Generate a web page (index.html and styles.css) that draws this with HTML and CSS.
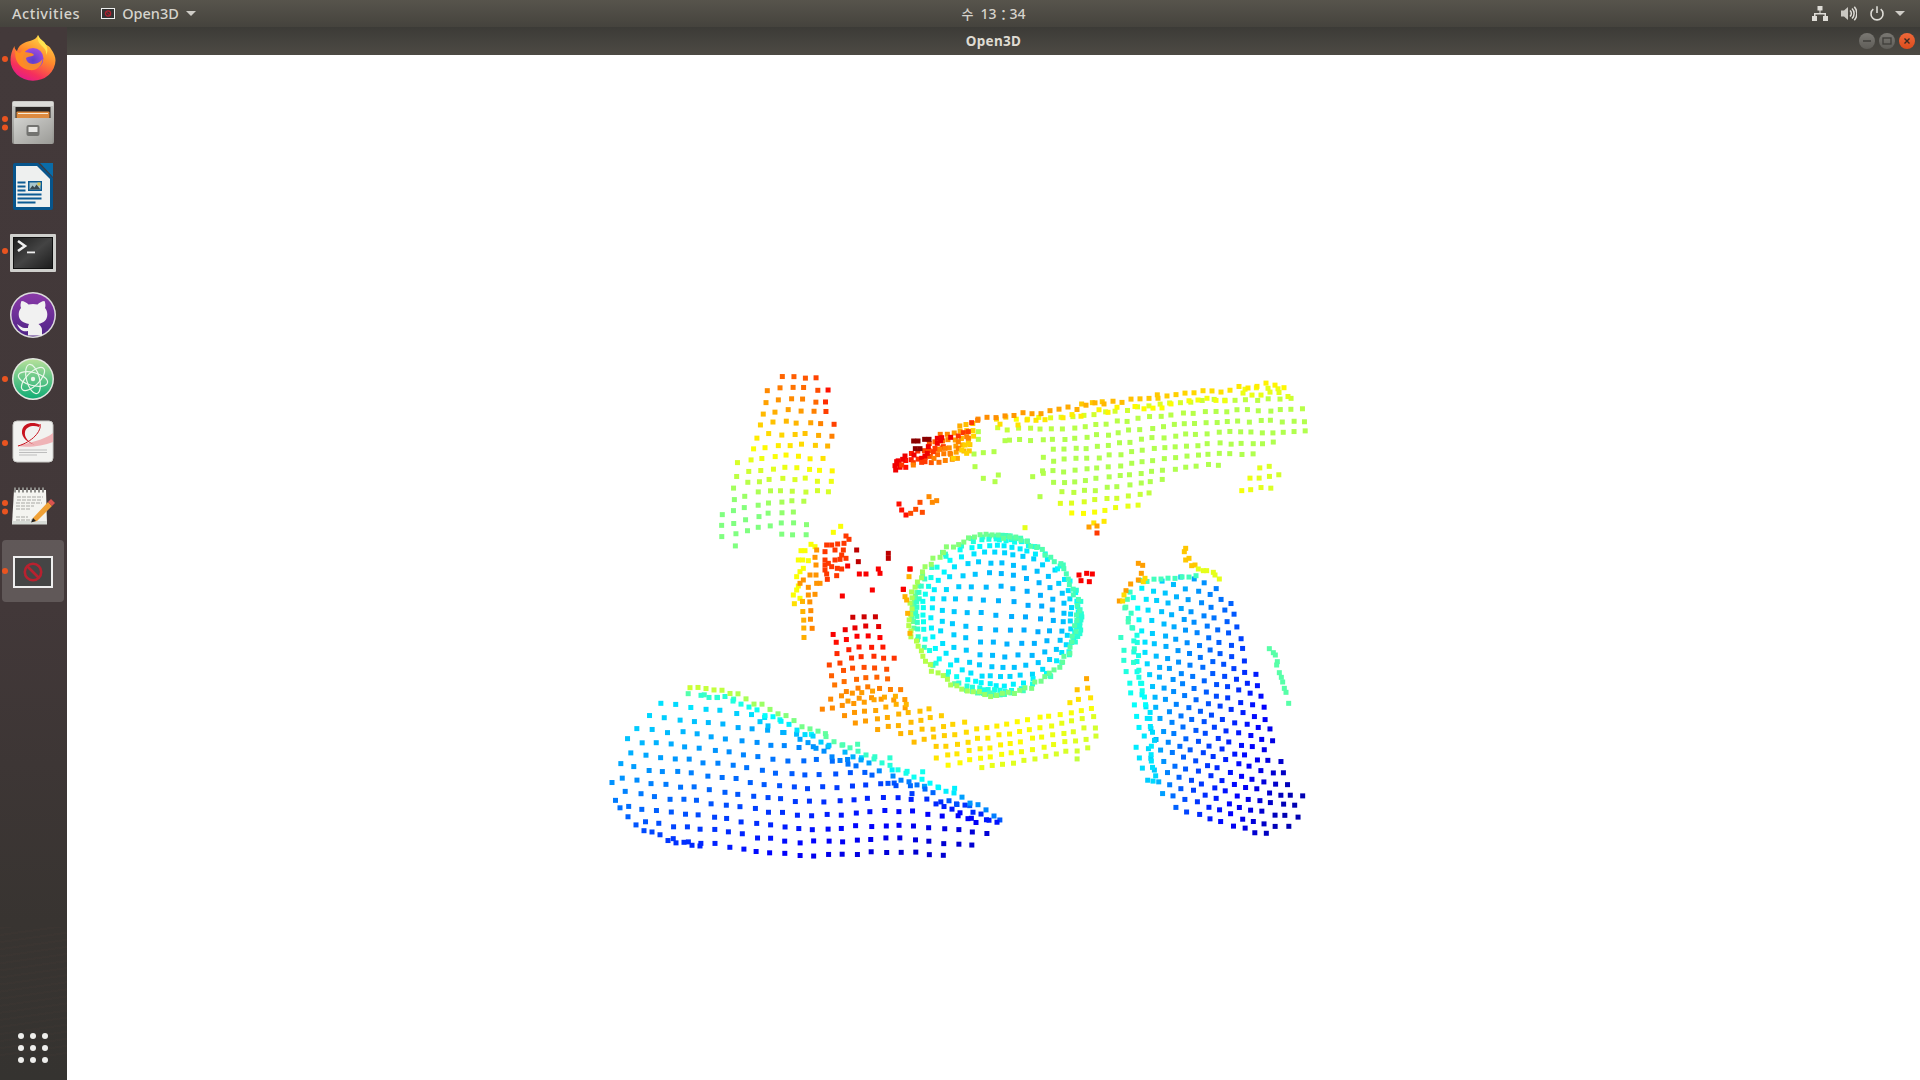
FILE: index.html
```html
<!DOCTYPE html>
<html lang="en">
<head>
<meta charset="utf-8">
<title>Open3D</title>
<link rel="stylesheet" href="styles.css">
</head>
<body>
<div class="desktop">
  <header class="topbar">
    <div class="top-left">
      <span class="top-label activities">Activities</span>
      <span class="app-menu">
        <svg class="mini-icon" viewBox="0 0 14 11"><rect x=".5" y=".5" width="13" height="10" fill="#333" stroke="#eee"/><circle cx="7" cy="5.5" r="2.6" fill="none" stroke="#b3202f" stroke-width="1.3"/><path d="M5.2 3.7l3.6 3.6" stroke="#b3202f"/></svg>
        <span class="top-label">Open3D</span>
        <svg class="caret" viewBox="0 0 10 5"><path d="M0 0h10L5 5z" fill="#cfcdc7"/></svg>
      </span>
    </div>
    <div class="clock"><span class="day">수</span><span>13</span><span class="colon">：</span><span>34</span></div>
    <div class="top-right">
      <svg class="status" viewBox="0 0 16 15"><path d="M5.5 0h5v4.5h-2V7H14v3h2v5h-5v-5h1.5V8.500h-9V10H5v5H0v-5h2V7h5.500V4.500h-2z" fill="#dedcd6"/></svg>
      <svg class="status" viewBox="0 0 16 15"><path d="M0 4.500h3L7 1v13L3 10.500H0z" fill="#c9c7c1"/><path d="M9 4.500a4 4 0 0 1 0 6M11 2.500a7 7 0 0 1 0 10M13.300 .8a10 10 0 0 1 0 13.400" fill="none" stroke="#dedcd6" stroke-width="1.500"/></svg>
      <svg class="status" viewBox="0 0 16 15"><path d="M4.300 3.200a6 6 0 1 0 7.400 0" fill="none" stroke="#dedcd6" stroke-width="1.600"/><path d="M8 .3v6.700" stroke="#dedcd6" stroke-width="1.600"/></svg>
      <svg class="caret tail" viewBox="0 0 10 5"><path d="M0 0h10L5 5z" fill="#cfcdc7"/></svg>
    </div>
  </header>
  <div class="workspace">
    <nav class="dock">
      <div class="dock-item run-1 first">
        <svg class="dock-icon" viewBox="0 0 48 48">
          <defs>
            <linearGradient id="ff" x1=".8" y1="0" x2=".3" y2="1"><stop offset="0" stop-color="#ffe14a"/><stop offset=".45" stop-color="#ff8a2c"/><stop offset=".8" stop-color="#f5305c"/><stop offset="1" stop-color="#e31a8c"/></linearGradient>
            <radialGradient id="ffg" cx=".5" cy=".6" r=".6"><stop offset="0" stop-color="#5a3fc8"/><stop offset="1" stop-color="#a04be0"/></radialGradient>
            <linearGradient id="metal" x1="0" y1="0" x2="0" y2="1"><stop offset="0" stop-color="#c9c9c6"/><stop offset="1" stop-color="#8f8f8b"/></linearGradient>
            <linearGradient id="drawer" x1="0" y1="0" x2="1" y2="1"><stop offset="0" stop-color="#d2d2cf"/><stop offset="1" stop-color="#9b9b97"/></linearGradient>
            <linearGradient id="term" x1="0" y1="0" x2="1" y2="1"><stop offset="0" stop-color="#1f1f1f"/><stop offset=".5" stop-color="#444"/><stop offset="1" stop-color="#1d1d1d"/></linearGradient>
            <linearGradient id="atom" x1="0" y1="0" x2="0" y2="1"><stop offset="0" stop-color="#b5e09a"/><stop offset="1" stop-color="#12ad75"/></linearGradient>
            <linearGradient id="gh" x1="0" y1="0" x2="0" y2="1"><stop offset="0" stop-color="#8a3aa8"/><stop offset="1" stop-color="#4f2487"/></linearGradient>
          </defs>
          <path d="M29 1c.5 4 3 6.500 7 9 3 1.500 5 3 6 5 3 4 4.500 8 4.500 11.500A22.500 20.500 0 0 1 1.500 26c0-5 1.500-10 4-14 0 2.500 1 4 2.500 5 1-4 4-7 8-8.500 5-2 11-2 13-7.500z" fill="url(#ff)"/>
          <path d="M29 1c-1 7 2 9 6 13 2 2 2.500 5 2 7 3-4 1-11-3-14-2-1.500-4-3.500-5-6z" fill="#ffe34f"/>
          <circle cx="24" cy="24.500" r="10.500" fill="url(#ffg)"/>
          <path d="M6 15c1 3 3 3.500 5 4 2-3 5-5 8-5-2 2-3 3-3 4 4 .500 8 1 9 3-2 2-6 1-8 3 0 3 3 6 7 6 5 0 8-3 9.500-5-.5 8-7 12-13 11-8-1-13-7-14-13-.5-3 0-5 -.5-8z" fill="#ff8f1f" opacity=".92"/>
        </svg>
      </div>
      <div class="dock-item run-2">
        <svg class="dock-icon" viewBox="0 0 48 48">
          <g transform="translate(0 2)">
            <rect x="3" y="1" width="42" height="43" rx="2" fill="url(#metal)"/>
            <rect x="4" y="2" width="40" height="4" fill="#dcdcd9"/>
            <rect x="6.500" y="7" width="35" height="11" fill="#2a2625"/>
            <rect x="7.500" y="11.500" width="33" height="7" rx="1" fill="#dd8a3f"/>
            <rect x="9" y="13" width="30" height="1" fill="#f6ead6"/>
            <rect x="5" y="18" width="38.500" height="26" rx="1" fill="url(#drawer)"/>
            <rect x="17.500" y="25" width="13" height="11" rx="2" fill="#737370"/>
            <rect x="19.500" y="27" width="9" height="5" fill="#e8e8e6"/>
          </g>
        </svg>
      </div>
      <div class="dock-item">
        <svg class="dock-icon" viewBox="0 0 48 48">
          <g transform="translate(0 1)">
            <path d="M6 0h23l15 15v30a2 2 0 0 1-2 2H6a2 2 0 0 1-2-2V2a2 2 0 0 1 2-2z" fill="#07558c"/>
            <path d="M31 0h13v14z" fill="#0a6ca8"/>
            <path d="M7 3h21l13 13v28H7z" fill="#eef0ef"/>
            <path d="M8.500 18.500h8v2h-8zM8.500 22.500h8v2h-8zM8.500 26.500h8v2h-8zM8.500 30.500h24v2h-24zM8.500 34.500h24v2h-24zM8.500 38.500h18v2h-18z" fill="#0b5a93"/>
            <rect x="19" y="18" width="14" height="10" fill="#0b5a93"/>
            <rect x="20.500" y="19.500" width="11" height="7" fill="#a9c7cc"/>
            <path d="M20.500 26.500l3-4 2 2 2-3 4 5z" fill="#3b4a50"/>
            <rect x="28.500" y="19.500" width="3" height="3" fill="#d9c24a"/>
          </g>
        </svg>
      </div>
      <div class="dock-item run-1">
        <svg class="dock-icon" viewBox="0 0 48 48">
          <g transform="translate(0 4)">
            <rect x="1" y="4" width="46" height="38" rx="1" fill="#cfcfcc"/>
            <rect x="4" y="7" width="40" height="32" fill="#111"/>
            <rect x="5" y="8" width="38" height="30" fill="url(#term)"/>
            <path d="M9 11l7 5-7 5" fill="none" stroke="#efefef" stroke-width="2.600"/>
            <rect x="18" y="21.500" width="8" height="1.800" fill="#efefef"/>
          </g>
        </svg>
      </div>
      <div class="dock-item">
        <svg class="dock-icon" viewBox="0 0 48 48">
          <g transform="translate(0 1)">
            <circle cx="24" cy="24" r="23" fill="#dcdcdc"/>
            <circle cx="24" cy="24" r="21.500" fill="url(#gh)"/>
            <path d="M12.500 10C15 10 18 12 19.500 13.500 22.500 12.800 25.500 12.800 28.500 13.500 30 12 33 10 35.500 10 36.500 12 36.800 15 36 17 37.600 19 38.300 21 38.300 23.500 38.300 29 34.500 32 29.500 33 31.500 34.500 33 36.500 33 39V44.500H19V40C15 41 11 40 8 33 11 35 13 37 16 37L19 37C19 35 19.500 34 20 33 14 32 9.700 29 9.700 23.500 9.700 21 10.400 19 12 17 11.200 15 11.500 12 12.500 10z" fill="#f1f1f1"/>
          </g>
        </svg>
      </div>
      <div class="dock-item run-1">
        <svg class="dock-icon" viewBox="0 0 48 48">
          <g transform="translate(0 1)">
            <circle cx="24" cy="24" r="21" fill="#e4e8e2"/>
            <circle cx="24" cy="24" r="19.500" fill="url(#atom)"/>
            <g fill="none" stroke="#e9f7ea" stroke-width="1.200">
              <ellipse cx="24" cy="24" rx="15" ry="6.500" transform="rotate(15 24 24)"/>
              <ellipse cx="24" cy="24" rx="15" ry="6.500" transform="rotate(75 24 24)"/>
              <ellipse cx="24" cy="24" rx="15" ry="6.500" transform="rotate(135 24 24)"/>
            </g>
            <circle cx="24" cy="24" r="2.200" fill="#e9f7ea"/>
          </g>
        </svg>
      </div>
      <div class="dock-item run-1">
        <svg class="dock-icon" viewBox="0 0 48 48">
          <rect x="4" y="3" width="40" height="41" rx="4" fill="#f2f2f0" stroke="#c9c9c6"/>
          <path d="M8 28c10-3 28-6 36-13v9c-10 4-25 6-36 4z" fill="#efb3b6"/>
          <path d="M31 7c-7-4-17-2-18 6-1 7 7 12 13 14-7-3-11-8-10-13 1-6 9-7 14-5z" fill="#c8141f"/>
          <path d="M31 6c2 7-8 18-22 22" fill="none" stroke="#c8141f" stroke-width="1"/>
          <path d="M10 32h28M10 34.500h28M10 37h18" stroke="#bdbdbd" stroke-width="1"/>
        </svg>
      </div>
      <div class="dock-item run-2">
        <svg class="dock-icon" viewBox="0 0 48 48">
          <g transform="translate(0 2)">
            <path d="M5 6h32l1 34H3z" fill="#f4f4f0"/>
            <path d="M3 37h35v3.500H3z" fill="#d7dbd6"/>
            <path d="M6 3.500v5M10 3.500v5M14 3.500v5M18 3.500v5M22 3.500v5M26 3.500v5M30 3.500v5M34 3.500v5" stroke="#8d8d8a" stroke-width="2"/>
            <path d="M8 13h26M8 16h24M7 19h26M7 22h18M7 25h14M7 33h12M7 36h16" stroke="#a8a8a4" stroke-width="1" stroke-dasharray="4 1"/>
            <path d="M24 34L39 18l4 4-15 15-5 1z" fill="#f0a136"/>
            <path d="M39 18l3-3 4 4-3 3z" fill="#d9534f"/>
            <path d="M22 38.500l2-4.500 3 3z" fill="#222"/>
          </g>
        </svg>
      </div>
      <div class="dock-item run-1 active">
        <svg class="dock-icon" viewBox="0 0 48 48">
          <g transform="translate(0 2)">
            <rect x="4" y="8" width="40" height="32" fill="#efefef"/>
            <rect x="6" y="10" width="36" height="28" fill="#454545"/>
            <circle cx="24" cy="24" r="8.200" fill="none" stroke="#b8212f" stroke-width="2.600"/>
            <path d="M18.500 18.500l11 11" stroke="#b8212f" stroke-width="2.600"/>
          </g>
        </svg>
      </div>
      <div class="dock-spacer"></div>
      <div class="grid-button">
        <i></i><i></i><i></i><i></i><i></i><i></i><i></i><i></i><i></i>
      </div>
    </nav>
    <main class="window">
      <div class="titlebar">
        <span class="title">Open3D</span>
        <div class="win-buttons">
          <span class="win-btn"><svg viewBox="0 0 16 16"><path d="M4 8h8" stroke="#3f3e3a" stroke-width="1.500"/></svg></span>
          <span class="win-btn"><svg viewBox="0 0 16 16"><rect x="4" y="5" width="8" height="6" fill="none" stroke="#3f3e3a" stroke-width="1.300"/></svg></span>
          <span class="win-btn close"><svg viewBox="0 0 16 16"><path d="M5.500 5.500l5 5M10.500 5.500l-5 5" stroke="#3a2a22" stroke-width="1.400"/></svg></span>
        </div>
      </div>
      <canvas id="cloud" class="cloud" width="1853" height="1025"></canvas>
    </main>
  </div>
</div>
<script src="cloud.js"></script>
</body>
</html>
```
FILE: styles.css
```css
* { box-sizing: border-box; }
html, body { margin: 0; height: 100%; overflow: hidden; background: #fff; }
.desktop { display: flex; flex-direction: column; width: 1920px; height: 1080px; font-family: "Noto Sans", "Noto Sans CJK KR", sans-serif; }

.topbar { flex: 0 0 27px; display: grid; grid-template-columns: 1fr auto 1fr; padding-left: 67px; align-items: center; background: linear-gradient(#57544c, #45433d); color: #d6d4cd; font-size: 14.500px; font-weight: 500; position: relative; }
.top-left { display: flex; align-items: center; margin-left: -55px; gap: 21px; }
.top-label { line-height: 1; }
.activities { letter-spacing: .57px; }
.app-menu { display: flex; align-items: center; gap: 7px; }
.mini-icon { width: 14px; height: 11px; }
.caret { width: 10px; height: 5px; }
.clock { display: flex; align-items: center; font-size: 14px; }
.day { margin-right: 7px; font-family: "Noto Sans CJK KR", sans-serif; font-size: 13px; }
.colon { font-family: "Noto Sans CJK KR", sans-serif; width: 13px; text-align: center; }
.top-right { display: flex; justify-content: flex-end; align-items: center; gap: 12.500px; padding-right: 15px; }
.status { width: 16px; height: 15px; }
.tail { margin-left: -2.500px; }

.workspace { flex: 1; display: flex; min-height: 0; }
.dock { flex: 0 0 67px; display: flex; flex-direction: column; padding: 0 1px 17px 0; background:
  repeating-linear-gradient(172deg, rgba(110,70,60,.05) 0 2px, rgba(0,0,0,0) 2px 7px) 0 900px / 100% 130px no-repeat,
  linear-gradient(#43393a, #423839 55%, #383431 85%, #353330); }
.dock-item { flex: 0 0 64px; display: flex; align-items: center; justify-content: center; position: relative; }
.dock-item.first { margin-top: -1px; }
.dock-icon { width: 48px; height: 48px; }
.dock-item.active::after { content: ""; position: absolute; left: 2px; right: 2px; top: 2px; bottom: 0; border-radius: 4px; background: rgba(255,255,255,.16); z-index: 0; }
.dock-item.active .dock-icon { position: relative; z-index: 1; }
.run-1::before, .run-2::before { content: ""; position: absolute; left: 2px; top: 50%; width: 6px; height: 6px; margin-top: -2px; border-radius: 50%; background: #e95420; z-index: 2; }
.run-2::before { margin-top: -6.500px; box-shadow: 0 8.500px 0 #e95420; }
.dock-spacer { flex: 1; }
.grid-button { display: grid; grid-template-columns: repeat(3, 6px); gap: 6px; justify-content: center; }
.grid-button i { width: 6px; height: 6px; border-radius: 50%; background: #eeeeec; }

.window { flex: 1; display: flex; flex-direction: column; min-width: 0; }
.titlebar { flex: 0 0 28px; display: flex; align-items: center; justify-content: center; position: relative; background: linear-gradient(#3c3b37, #4d4a44); }
.title { color: #dfdbd2; font-size: 13.500px; font-weight: 700; letter-spacing: .3px; }
.win-buttons { position: absolute; right: 5px; top: 6px; display: flex; gap: 4px; }
.win-btn { width: 16px; height: 16px; border-radius: 50%; background: linear-gradient(#7a7873, #5f5d58); }
.win-btn svg { display: block; width: 16px; height: 16px; }
.win-btn.close { background: linear-gradient(#f0683a, #dc4c1c); }
.cloud { display: block; width: 1853px; height: 1025px; background: #fff; }
```
FILE: cloud.js
```js
(function () {
  var ctx = document.getElementById('cloud').getContext('2d');
  var OX = 67, OY = 55, seed = 12345;
  function rnd() { seed = (seed * 1664525 + 1013904223) >>> 0; return seed / 4294967296; }
  function base(v) {
    if (v <= -0.75) return 0;
    if (v <= -0.25) return (v + 0.75) / 0.5;
    if (v <= 0.25) return 1;
    if (v <= 0.75) return (0.75 - v) / 0.5;
    return 0;
  }
  function jet(t) {
    var r = base(2 * t - 1.5), g = base(2 * t - 1), b = base(2 * t - 0.5);
    return 'rgb(' + Math.round(r * 255) + ',' + Math.round(g * 255) + ',' + Math.round(b * 255) + ')';
  }
  function dot(x, y, t) { ctx.fillStyle = jet(t); ctx.fillRect(x - OX - 2.5, y - OY - 2.5, 5, 5); }
  function inside(p, x, y) {
    var c = false;
    for (var i = 0, j = p.length - 1; i < p.length; j = i++) {
      if ((p[i][1] > y) !== (p[j][1] > y) && x < (p[j][0] - p[i][0]) * (y - p[i][1]) / (p[j][1] - p[i][1]) + p[i][0]) c = !c;
    }
    return c;
  }
  function lattice(poly, o, u, v, tf, jit, warp) {
    for (var i = -70; i <= 70; i++) for (var j = -70; j <= 70; j++) {
      var x = o[0] + i * u[0] + j * v[0], y = o[1] + i * u[1] + j * v[1];
      if (warp) { var w = warp(x, y); x = w[0]; y = w[1]; }
      x += (rnd() - 0.5) * jit; y += (rnd() - 0.5) * jit;
      if (inside(poly, x, y)) dot(x, y, tf(x, y));
    }
  }
  function scatter(list, t, sx, sy) {
    list.forEach(function (p) { dot(sx + p[0] / 3, sy + p[1] / 3, t); });
  }
  function lerp(pts, x) {
    if (x <= pts[0][0]) return pts[0][1];
    for (var i = 1; i < pts.length; i++) if (x <= pts[i][0]) {
      return pts[i - 1][1] + (pts[i][1] - pts[i - 1][1]) * (x - pts[i - 1][0]) / (pts[i][0] - pts[i - 1][0]);
    }
    return pts[pts.length - 1][1];
  }

  /* tall panel, upper left */
  lattice([[782,375],[790,368],[802,367],[818,371],[825,381],[832,397],[835,423],[837,437],[834,467],[837,490],[835,498],[818,500],[802,516],[820,528],[800,544],[770,537],[742,541],[739,561],[731,550],[716,538],[713,524],[725,506],[729,495],[731,465],[744,451],[750,433],[757,414],[765,405],[764,394],[772,385]],
    [780,450], [12,-1.2], [-1.5,11.4],
    function (x, y) {
      var d = (x - 838) * (x - 838) / 300 + (y - 405) * (y - 405) / 1400;
      return Math.max(0.5, 0.5 + (515 - y) * 0.0019 + (x - 760) * 0.0006) + 0.13 * Math.exp(-d);
    }, 3,
    function (x, y) { return [x + 5 * Math.sin(y / 28), y + 5 * Math.sin(x / 26)]; });

  /* long ridge, upper right */
  var ridge = function (x) { return lerp([[975,421],[1115,402],[1180,394],[1270,385],[1300,392]], x); };
  lattice([[985,415],[1115,400],[1180,392],[1210,395],[1270,383],[1295,392],[1305,410],[1308,437],[1290,440],[1262,455],[1227,465],[1175,472],[1160,490],[1162,500],[1130,510],[1115,515],[1100,530],[1085,515],[1062,515],[1055,495],[1040,490],[1043,465],[1045,445],[1000,440]],
    [1150,440], [11,-0.8], [0.3,10.8],
    function (x, y) {
      var k = Math.exp(-Math.max(0, y - ridge(x)) / 7), s = x < 1200 ? 0.13 : 0.08, tip = Math.max(0, y - 488) * 0.003 * (x < 1170 ? 1 : 0);
      return 0.548 + s * k + tip;
    }, 2.4,
    function (x, y) { return [x + 3 * Math.sin(y / 22), y + 3 * Math.sin(x / 40)]; });
  /* dense crest of the ridge */
  for (var cx = 978; cx < 1290; cx += 9) {
    var cy = ridge(cx) + (rnd() - 0.5) * 5;
    dot(cx, cy, 0.74 - (cx - 978) * 0.00035);
    if (rnd() > 0.25) dot(cx + 4, cy + 6 + rnd() * 4, 0.66 - (cx - 978) * 0.0002);
  }
  /* lobe beneath the ridge */
  lattice([[1252,460],[1272,460],[1287,470],[1285,478],[1272,488],[1262,498],[1232,499],[1240,485],[1248,478]],
    [1260,478], [10,-1], [1,10], function (x, y) { return 0.62 - (x - 1235) * 0.0009; }, 2.5);
  scatter([[825,350],[850,385],[895,375],[885,395],[835,245],[835,268],[882,305],[850,308],[822,312],[915,272]], 0.55, 700, 350);
  scatter([[998,380],[1020,440],[1030,322],[1030,370]], 0.55, 700, 350);
  dot(1097, 533, 0.82); dot(1097, 526, 0.72); dot(1089, 527, 0.72);

  /* dark red tail */
  lattice([[893,462],[930,440],[965,420],[975,420],[973,455],[945,463],[915,464],[895,472]],
    [930,450], [6.5,-1], [1,6.5], function (x) { return 0.9 - (x - 893) * 0.0029; }, 2);
  scatter([[641,273],[654,273],[674,268],[687,268],[646,296],[660,296]], 0.99, 700, 350);
  scatter([[585,347],[597,342],[587,360],[590,335],[615,318],[608,328],[642,315],[665,325],[675,318],[685,290],[682,310],[712,265],[725,263],[712,280],[752,262],[722,272]], 0.89, 700, 350);
  scatter([[605,345],[640,338],[665,337],[675,335],[700,305],[705,295],[730,290],[775,258],[790,248],[805,245],[815,218]], 0.82, 700, 350);
  scatter([[640,345],[702,325],[720,298],[735,295],[750,310],[775,275],[775,295],[800,260],[805,265],[833,211]], 0.75, 700, 350);
  scatter([[760,325],[785,300],[800,310],[795,285],[805,280]], 0.67, 700, 350);
  /* small hook below the tail */
  scatter([[597,462],[605,480],[618,495]], 0.86, 700, 350);
  scatter([[632,490],[647,478],[660,457],[667,487]], 0.8, 700, 350);
  scatter([[687,440],[697,457],[710,452]], 0.74, 700, 350);

  /* left strip with the red edge */
  scatter([[333,583],[345,590],[303,602],[315,602],[295,630],[308,630],[325,632],[300,665],[310,655],[290,680],[295,708],[290,720],[280,735],[300,745],[400,547],[422,529]], 0.62, 700, 350);
  scatter([[350,600],[345,622],[348,645],[330,675],[348,675],[350,700],[360,700],[310,690],[325,712],[300,700],[325,735],[345,733]], 0.73, 700, 350);
  scatter([[380,585],[395,585],[413,582],[432,580],[405,600],[375,605],[430,600],[425,615],[375,630],[405,630],[420,628],[438,625],[375,645],[385,640],[375,660],[395,650],[412,655],[425,657],[380,672],[382,688],[410,677],[447,568],[438,558]], 0.82, 700, 350);
  lattice([[793,595],[818,592],[814,620],[810,646],[800,642]],
    [803,620], [8,-1], [0.5,9], function (x) { return 0.66 + (x - 795) * 0.005; }, 2);
  /* stray reds */
  scatter([[470,600],[565,610],[565,625],[475,635]], 0.94, 700, 350);
  scatter([[478,672],[498,672],[535,657],[540,670],[517,720],[427,738],[610,718],[630,657],[443,648]], 0.88, 700, 350);

  /* column */
  lattice([[830,628],[850,618],[870,610],[885,620],[900,680],[918,712],[840,702],[832,680],[826,650]],
    [860,650], [11,-1.5], [2.2,10],
    function (x, y) { return Math.max(0.72, 0.88 - (y - 635) * 0.0024); }, 2.4,
    function (x, y) { return [x, y + 3 * Math.sin(x / 14)]; });
  /* yellow band */
  lattice([[813,705],[845,690],[895,690],[905,695],[950,715],[1000,725],[1050,715],[1070,695],[1090,670],[1098,700],[1097,757],[1000,767],[945,771],[930,750],[890,735],[860,725],[815,712]],
    [1000,745], [10.5,-2], [1.5,9.6],
    function (x, y) { return 0.75 - (x - 815) * 0.0006 - Math.max(0, y - 745) * 0.002 + Math.max(0, 720 - y) * 0.003 * (x > 1040 ? 1 : 0); }, 2.2);

  /* sphere: a lattice of equal angles wrapped on the ball */
  var CX = 994, CY = 615, RX = 88, RY = 83, step = 10.2 * Math.PI / 180;
  for (var i = -8; i <= 8; i++) for (var j = -8; j <= 8; j++) {
    var a = Math.tan(i * step), b = Math.tan(j * step), n = Math.sqrt(a * a + b * b + 1);
    var X = a / n, Y = b / n, Z = 1 / n;
    var qx = X * 0.995 - Y * 0.1, qy = X * 0.1 + Y * 0.995;
    if (Z < 0.09) continue;
    dot(CX + 3 + (RX - 3) * qx + (rnd() - 0.5) * 2.4, CY + (RY - 3) * qy + (rnd() - 0.5) * 2.4,
      0.3 + 0.19 * Math.pow(1 - Z, 1.7) - qx * 0.03);
  }
  for (var ang = 0; ang < Math.PI * 2; ang += 0.07) {
    var rr = 0.985 - rnd() * 0.06;
    dot(CX + RX * rr * Math.cos(ang), CY + RY * rr * Math.sin(ang), 0.5 - Math.cos(ang) * 0.05 + Math.sin(ang) * 0.02);
  }
  scatter([[35,240],[42,170],[30,230],[45,340],[38,280]], 0.7, 895, 520);
  scatter([[45,147],[25,208]], 0.88, 895, 520);
  scatter([[237,165],[260,160],[277,162],[243,182],[268,185]], 0.88, 1000, 520);
  scatter([[75,473]], 0.6, 1000, 370);

  /* big pillow, bottom left */
  var crest = [[680,688],[720,688],[760,705],[830,738],[900,772],[960,797],[1003,820]];
  function pillowT(x, y) {
    var t = 0.28 - (x - 620) * 0.00035 - (y - 770) * 0.0012;
    if (x > 680) t += 0.22 * Math.exp(-Math.max(0, y - lerp(crest, x)) / 8) * (x > 960 ? 0.7 : 1);
    return Math.max(0.08, t);
  }
  lattice([[612,770],[622,743],[652,705],[663,697],[697,690],[708,688],[727,694],[770,710],[813,726],[867,743],[920,770],[960,790],[990,811],[1005,820],[1000,833],[978,853],[918,858],[777,857],[713,848],[675,842],[645,830],[615,807],[612,783]],
    [760,770], [14.5,0.4], [1.2,13.6], pillowT, 2.4,
    function (x, y) {
      var d = Math.max(0, 770 - x);
      return [x + 5 * Math.sin(y / 40) + (y - 770) * d * 0.0005, y - d * d * 0.0008 + 3 * Math.sin(x / 30)];
    });
  for (var px = 690; px < 1000; px += 8) {
    var py = lerp(crest, px);
    dot(px, py + (rnd() - 0.5) * 4, pillowT(px, py));
    if (rnd() > 0.2) dot(px + 3, py + 7 + rnd() * 3, pillowT(px, py + 8));
    if (px > 760 && rnd() > 0.3) dot(px - 2, py + 14 + rnd() * 3, pillowT(px, py + 15));
  }
  /* rim along the lower left of the pillow */
  var rim = [[612,783],[615,800],[627,817],[645,830],[675,842],[705,847]];
  for (var q = 612; q < 705; q += 8) {
    var ry = lerp(rim, q) + (rnd() - 0.5) * 3;
    dot(q, ry, pillowT(q, ry));
  }

  /* right blob */
  function xl(y) { return 1125 + (y - 590) * 0.17; }
  function blobT(x, y) {
    var d = x - xl(y);
    return Math.max(0.05, 0.375 - 0.0014 * d - 0.0007 * (y - 590) + 0.07 * Math.exp(-Math.max(0, d) / 10));
  }
  lattice([[1178,572],[1218,585],[1235,600],[1240,635],[1245,645],[1248,663],[1258,675],[1260,692],[1268,707],[1270,727],[1278,753],[1285,773],[1290,787],[1305,795],[1297,807],[1302,823],[1272,834],[1237,832],[1213,828],[1183,812],[1157,802],[1148,785],[1140,765],[1134,747],[1133,720],[1124,693],[1122,677],[1119,657],[1119,632],[1120,607],[1135,590],[1163,578]],
    [1200,700], [11.5,2.5], [2.8,11.2], blobT, 2.6,
    function (x, y) { return [x + 3 * Math.sin(y / 30), y + 4 * Math.sin(x / 32)]; });
  for (var ey = 592; ey < 785; ey += 7) {
    var ex = xl(ey) - 2 + (rnd() - 0.3) * 10;
    dot(ex, ey + rnd() * 2, blobT(ex, ey) + 0.02);
  }
  for (var c = 1140; c < 1200; c += 7) dot(c, 580 - (c - 1140) * 0.1 + rnd() * 3, 0.44);
  /* orange cap on the blob */
  scatter([[557,85],[553,95],[567,115],[557,120],[575,137],[585,135]], 0.68, 1000, 520);
  scatter([[595,147],[610,152],[620,152],[640,157],[645,165],[658,177]], 0.6, 1000, 520);
  scatter([[415,130],[428,136],[424,160],[415,180],[392,192],[378,212],[358,243]], 0.72, 1000, 520);
  scatter([[435,175],[372,225],[368,243],[430,185]], 0.66, 1000, 520);

  /* thin sliver to the right */
  scatter([[808,386],[820,398],[826,405],[832,425],[830,435],[838,458],[844,472],[848,486],[853,505],[858,517],[866,550]], 0.46, 1000, 520);
})();
```
